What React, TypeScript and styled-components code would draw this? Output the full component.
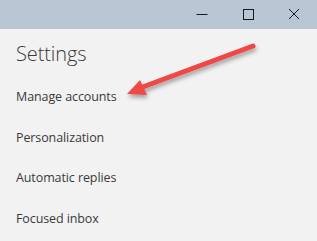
import styled, { createGlobalStyle } from "styled-components";

const GlobalStyle = createGlobalStyle`
  html, body {
    margin: 0;
    padding: 0;
    background: #f2f2f2;
  }
  body {
    font-family: "Open Sans", "Noto Sans", sans-serif;
  }
`;

const Window = styled.div`
  position: relative;
  width: 317px;
  height: 241px;
  background: #f2f2f2;
  overflow: hidden;
`;

const TitleBar = styled.div`
  height: 29px;
  background: #b8c7d3;
  display: flex;
  justify-content: flex-end;
  align-items: stretch;
`;

const CaptionButton = styled.div`
  width: 46px;
  display: flex;
  align-items: center;
  justify-content: center;
  margin-top: -2px;
`;

const Content = styled.div`
  padding: 11px 16px 0 16px;
`;

const Title = styled.h1`
  margin: 0 0 20px 0;
  font-size: 20px;
  font-weight: 300;
  color: #3a3a3a;
  line-height: 28px;
  letter-spacing: -0.1px;
`;

const Menu = styled.div`
  display: flex;
  flex-direction: column;
  gap: 22.5px;
`;

const MenuItem = styled.div`
  font-size: 12.5px;
  line-height: 18px;
  color: #3a3a3a;
  letter-spacing: -0.1px;
`;

const Arrow = styled.svg`
  position: absolute;
  left: 0;
  top: 0;
  pointer-events: none;
`;

const items = ["Manage accounts", "Personalization", "Automatic replies", "Focused inbox"];

export default function App() {
  return (
    <Window>
      <GlobalStyle />
      <TitleBar>
        <CaptionButton>
          <svg width="12" height="12" viewBox="0 0 12 12">
            <line x1="0.5" y1="6.5" x2="11.5" y2="6.5" stroke="#1a1a1a" strokeWidth="1" />
          </svg>
        </CaptionButton>
        <CaptionButton>
          <svg width="12" height="12" viewBox="0 0 12 12">
            <rect x="1.5" y="1.5" width="10" height="10" fill="none" stroke="#1a1a1a" strokeWidth="1" />
          </svg>
        </CaptionButton>
        <CaptionButton>
          <svg width="12" height="12" viewBox="0 0 12 12">
            <path d="M1 1 L11 11 M11 1 L1 11" stroke="#1a1a1a" strokeWidth="1" />
          </svg>
        </CaptionButton>
      </TitleBar>
      <Content>
        <Title>Settings</Title>
        <Menu>
          {items.map((item) => (
            <MenuItem key={item}>{item}</MenuItem>
          ))}
        </Menu>
      </Content>
      <Arrow width="317" height="241" viewBox="0 0 317 241">
        <defs>
          <filter id="sh" x="-20%" y="-50%" width="140%" height="200%">
            <feDropShadow dx="1" dy="3" stdDeviation="2" floodColor="#000" floodOpacity="0.35" />
          </filter>
        </defs>
        <g filter="url(#sh)">
          <line x1="253" y1="46" x2="140" y2="88" stroke="#f04646" strokeWidth="5" strokeLinecap="round" />
          <polygon points="127,94 140,80 147,95" fill="#f04646" />
        </g>
      </Arrow>
    </Window>
  );
}
